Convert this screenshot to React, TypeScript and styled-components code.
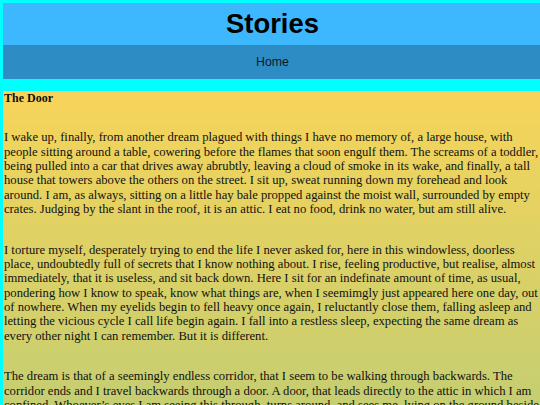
import React from 'react';
import styled, { createGlobalStyle } from 'styled-components';

const GlobalStyle = createGlobalStyle`
  html, body {
    margin: 0;
    padding: 0;
    overflow: hidden;
    background: #00ffff;
  }
`;

const Page = styled.div`
  width: 539px;
  padding: 3px 0 0 3px;
  background: #00ffff;
`;

const Header = styled.header`
  height: 42px;
  display: flex;
  align-items: center;
  justify-content: center;
  background: #3db7fd;
  h1 {
    margin: 0;
    font-family: 'Liberation Sans', Arial, sans-serif;
    font-size: 27.4px;
    line-height: 1;
    font-weight: 700;
    color: #000;
  }
`;

const Nav = styled.nav`
  height: 34px;
  display: flex;
  align-items: center;
  justify-content: center;
  background: #2e8cc5;
  margin-bottom: 12px;
  a {
    font-family: 'Liberation Sans', Arial, sans-serif;
    font-size: 12.3px;
    color: #0a1a2a;
    text-decoration: none;
  }
`;

const Story = styled.main`
  padding: 0 0 40px 1px;
  min-height: 600px;
  background: linear-gradient(to bottom, #f7d459 0px, #c4ce72 320px, #a8cf86 700px);
  font-family: 'Liberation Serif', 'Times New Roman', serif;
  font-size: 12.65px;
  line-height: 14.35px;
  color: #111;
  white-space: nowrap;
  h5 {
    margin: 0 0 25px;
    font-size: 12px;
    font-weight: 700;
  }
  p {
    margin: 0 0 26.3px;
  }
`;

// lines broken as they fall in the original page
const paragraphs: string[][] = [
  [
    'I wake up, finally, from another dream plagued with things I have no memory of, a large house, with',
    'people sitting around a table, cowering before the flames that soon engulf them. The screams of a toddler,',
    'being pulled into a car that drives away abrubtly, leaving a cloud of smoke in its wake, and finally, a tall',
    'house that towers above the others on the street. I sit up, sweat running down my forehead and look',
    'around. I am, as always, sitting on a little hay bale propped against the moist wall, surrounded by empty',
    'crates. Judging by the slant in the roof, it is an attic. I eat no food, drink no water, but am still alive.',
  ],
  [
    'I torture myself, desperately trying to end the life I never asked for, here in this windowless, doorless',
    'place, undoubtedly full of secrets that I know nothing about. I rise, feeling productive, but realise, almost',
    'immediately, that it is useless, and sit back down. Here I sit for an indefinate amount of time, as usual,',
    'pondering how I know to speak, know what things are, when I seemimgly just appeared here one day, out',
    'of nowhere. When my eyelids begin to fell heavy once again, I reluctantly close them, falling asleep and',
    'letting the vicious cycle I call life begin again. I fall into a restless sleep, expecting the same dream as',
    'every other night I can remember. But it is different.',
  ],
  [
    'The dream is that of a seemingly endless corridor, that I seem to be walking through backwards. The',
    'corridor ends and I travel backwards through a door. A door, that leads directly to the attic in which I am',
    'confined. Whoever\u2019s eyes I am seeing this through, turns around, and sees me, lying on the ground beside',
    'the crates, and I wake up once more, alone in the attic.',
  ],
];

const App: React.FC = () => {
  return (
    <Page>
      <GlobalStyle />
      <Header>
        <h1>Stories</h1>
      </Header>
      <Nav>
        <a href='#'>Home</a>
      </Nav>
      <Story>
        <h5>The Door</h5>
        {paragraphs.map((lines, i) => (
          <p key={i}>
            {lines.map((line, j) => (
              <React.Fragment key={j}>
                {j > 0 && <br />}
                {line}
              </React.Fragment>
            ))}
          </p>
        ))}
      </Story>
    </Page>
  );
};

export default App;
